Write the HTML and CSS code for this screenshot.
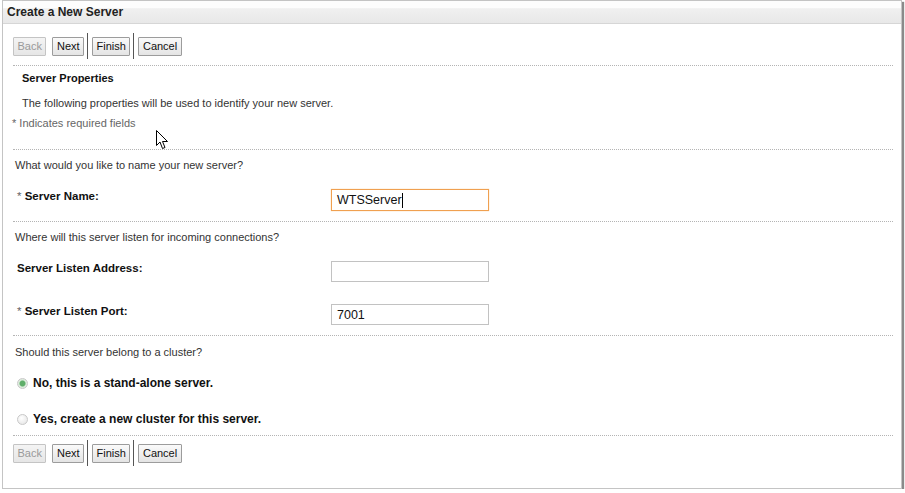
FILE: index.html
```html
<!doctype html>
<html lang="en">
  <head>
    <meta charset="UTF-8" />
    <title>Create a New Server</title>
    <link rel="stylesheet" href="styles.css">
  </head>
  <body>
    <div class="panel">
      <div class="title-bar">Create a New Server</div>

      <div class="content">
        <div class="btn-bar">
          <button type="button" class="btn" disabled>Back</button>
          <button type="button" class="btn">Next</button>
          <span class="sep"></span>
          <button type="button" class="btn">Finish</button>
          <span class="sep"></span>
          <button type="button" class="btn">Cancel</button>
        </div>

        <div class="rule"></div>

        <div class="intro">
          <div class="intro-head">Server Properties</div>
          <div class="intro-text">The following properties will be used to identify your new server.</div>
          <div class="required-note"><span class="star">*</span> Indicates required fields</div>
        </div>

        <div class="rule"></div>

        <div class="group">
          <div class="question">What would you like to name your new server?</div>
          <div class="field-row first">
            <label class="field-label"><span class="star">*</span> Server Name:</label>
            <div class="textbox focused"><span>WTSServer</span><span class="caret"></span></div>
          </div>
        </div>

        <div class="rule"></div>

        <div class="group">
          <div class="question">Where will this server listen for incoming connections?</div>
          <div class="field-row first">
            <label class="field-label">Server Listen Address:</label>
            <div class="textbox"></div>
          </div>
          <div class="field-row second">
            <label class="field-label"><span class="star">*</span> Server Listen Port:</label>
            <div class="textbox"><span>7001</span></div>
          </div>
        </div>

        <div class="rule"></div>

        <div class="group cluster">
          <div class="question">Should this server belong to a cluster?</div>
          <div class="radio-row first">
            <span class="radio checked"></span>
            <span class="radio-label">No, this is a stand-alone server.</span>
          </div>
          <div class="radio-row second">
            <span class="radio"></span>
            <span class="radio-label">Yes, create a new cluster for this server.</span>
          </div>
        </div>

        <div class="rule"></div>

        <div class="btn-bar bottom">
          <button type="button" class="btn" disabled>Back</button>
          <button type="button" class="btn">Next</button>
          <span class="sep"></span>
          <button type="button" class="btn">Finish</button>
          <span class="sep"></span>
          <button type="button" class="btn">Cancel</button>
        </div>
      </div>
    </div>

    <!-- mouse pointer captured in the screenshot -->
    <svg class="pointer" width="13" height="21" viewBox="0 0 13 21">
      <path d="M0.5 0.5 L0.5 15.5 L4 12 L6.5 18.5 L9 17.5 L6.5 11.5 L11.5 11.5 Z" fill="#fff" stroke="#000" stroke-width="1" />
    </svg>
  </body>
</html>
```

FILE: styles.css
```css
body {
  margin: 0;
  background: #fff;
  font-family: "Liberation Sans", Arial, sans-serif;
  font-size: 11px;
  color: #333;
}
.panel {
  position: relative;
  margin-left: 2px;
  width: 898px;
  height: 487px;
  border: 1px solid #c4c4c4;
  box-shadow: 2px 2px 1px #8a8a8a;
  background: #fff;
}
.title-bar {
  height: 22px;
  line-height: 22px;
  padding-left: 4px;
  font-size: 12px;
  font-weight: bold;
  color: #222;
  background: linear-gradient(#fdfdfd 0, #fdfdfd 30%, #f0f0f0 35%, #e8e8e8 100%);
  border-bottom: 1px solid #d6d6d6;
}
.content {
  padding: 0 8px 0 10px;
}
.btn-bar {
  display: flex;
  align-items: center;
  height: 26px;
  margin-top: 9px;
}
.btn-bar.bottom {
  margin-top: 4px;
}
.btn {
  height: 19px;
  padding: 0 3.5px;
  margin-right: 6px;
  font-family: "Liberation Sans", Arial, sans-serif;
  font-size: 11px;
  color: #111;
  background: linear-gradient(#fafafa, #e4e4e4);
  border: 1px solid #9c9c9c;
  border-radius: 1px;
}
.btn:disabled {
  color: #9a9a9a;
  border-color: #c4c4c4;
  background: linear-gradient(#f4f4f4, #e6e6e6);
}
.sep {
  width: 1px;
  height: 26px;
  background: #555;
  margin: 0 4px 0 -3px;
}
.rule {
  border-top: 1px dotted #b4b4b4;
  margin-top: 6px;
}
.intro {
  padding: 5px 0 19px 9px;
}
.intro-head {
  font-weight: bold;
  color: #111;
  line-height: 14px;
}
.intro-text {
  margin-top: 11px;
  line-height: 14px;
}
.required-note {
  margin: 6px 0 0 -10px;
  line-height: 14px;
  color: #666;
}
.star {
  color: #666;
  font-weight: normal;
}
.intro + .rule {
  margin-top: 0;
}
.group {
  padding: 8px 0 10px 2px;
}
.group.cluster {
  padding: 9px 0 9px 2px;
}
.group + .rule {
  margin-top: 0;
}
.question {
  line-height: 14px;
}
.field-row {
  display: flex;
  align-items: flex-start;
  padding-left: 2px;
}
.field-row.first {
  margin-top: 17px;
}
.field-row.second {
  margin-top: 22px;
}
.field-label {
  width: 314px;
  line-height: 14px;
  font-size: 11.5px;
  font-weight: bold;
  color: #111;
}
.textbox {
  box-sizing: border-box;
  width: 158px;
  height: 21px;
  padding: 0 5px;
  border: 1px solid #c2c2c2;
  display: flex;
  align-items: center;
  font-family: "Liberation Sans", Arial, sans-serif;
  font-size: 12.5px;
  color: #111;
}
.textbox.focused {
  height: 22px;
  border-color: #f0a050;
  box-shadow: 0 0 1px #f6c080;
}
.caret {
  width: 1px;
  height: 15px;
  background: #000;
}
.radio-row {
  display: flex;
  align-items: center;
  height: 14px;
  padding-left: 2px;
}
.radio-row.first {
  margin-top: 17px;
}
.radio-row.second {
  margin-top: 22px;
}
.radio {
  box-sizing: border-box;
  width: 11px;
  height: 11px;
  border-radius: 50%;
  border: 1px solid #c8c8c8;
  background: radial-gradient(circle at 40% 35%, #fff, #e2e2e2);
  margin-right: 5px;
}
.radio.checked {
  background: radial-gradient(circle, #5fae6a 0, #5fae6a 2.5px, #d9ecd9 3.5px, #eee 100%);
}
.radio-label {
  font-weight: bold;
  font-size: 12px;
  color: #111;
}
.pointer {
  position: absolute;
  left: 156px;
  top: 130px;
}
```
